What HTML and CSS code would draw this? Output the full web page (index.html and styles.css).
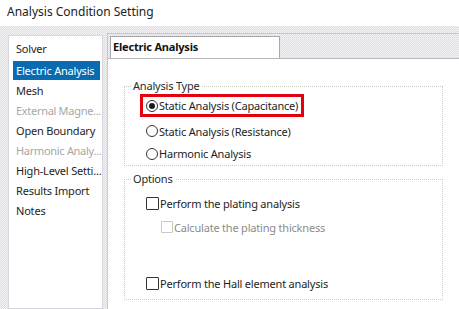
FILE: index.html
```html
<!DOCTYPE html>
<html>
<head>
<meta charset="utf-8">
<link rel="stylesheet" href="styles.css">
</head>
<body>
<div class="title">Analysis Condition Setting</div>
<div class="main">
  <div class="nav">
    <div class="item first">Solver</div>
    <div class="item selected">Electric Analysis</div>
    <div class="item">Mesh</div>
    <div class="item disabled">External Magne...</div>
    <div class="item">Open Boundary</div>
    <div class="item disabled">Harmonic Analy...</div>
    <div class="item">High-Level Setti...</div>
    <div class="item">Results Import</div>
    <div class="item">Notes</div>
  </div>
  <div class="panel">
    <div class="header"><div class="header-label">Electric Analysis</div></div>
    <div class="content">
      <div class="group type-group">
        <span class="legend">Analysis Type</span>
        <div class="radio-row highlight"><span class="radio checked"></span><span class="label">Static Analysis (Capacitance)</span></div>
        <div class="radio-row r2"><span class="radio"></span><span class="label">Static Analysis (Resistance)</span></div>
        <div class="radio-row r3"><span class="radio"></span><span class="label">Harmonic Analysis</span></div>
      </div>
      <div class="group options-group">
        <span class="legend">Options</span>
        <div class="check-row"><span class="check"></span><span class="label">Perform the plating analysis</span></div>
        <div class="check-row sub disabled"><span class="check"></span><span class="label">Calculate the plating thickness</span></div>
        <div class="check-row last"><span class="check"></span><span class="label">Perform the Hall element analysis</span></div>
      </div>
    </div>
  </div>
</div>
</body>
</html>
```
FILE: styles.css
```css
* { box-sizing: border-box; }
html, body { margin: 0; padding: 0; }
body {
  width: 459px;
  height: 309px;
  overflow: hidden;
  font-family: "Noto Sans", "Open Sans", sans-serif;
  font-size: 11px;
  letter-spacing: -0.2px;
  color: #1e1e1e;
  background-color: #ebe9ed;
  background-image: repeating-conic-gradient(#dddbe0 0 25%, #f5f4f6 0 50%);
  background-size: 2px 2px;
}
.title {
  height: 26px;
  background: #fff;
  padding: 4px 0 0 7px;
  font-size: 12px;
  letter-spacing: 0;
  line-height: 16px;
  color: #222;
}
.main {
  display: flex;
  align-items: flex-start;
  padding-left: 8px;
  height: 283px;
}
.nav {
  width: 95px;
  margin-top: 9px;
  height: 274px;
  background: #fff;
  border: 1px solid #d6d6dc;
  padding: 3px 1px 0 4px;
}
.item {
  height: 20px;
  line-height: 20px;
  padding-left: 3px;
  white-space: nowrap;
}
.item.first { margin-bottom: 2px; }
.item.selected {
  background: #0a6bb0;
  color: #fff;
  height: 19px;
  line-height: 19px;
  margin-bottom: 1px;
  margin-right: 1px;
}
.item.disabled { color: #a7a7a7; letter-spacing: -0.3px; }
.panel {
  flex: 1;
  margin-left: 4px;
  margin-top: 7px;
  height: 276px;
  border-left: 1px solid #c9c8cc;
  border-top: 1px solid #c9c8cc;
  display: flex;
  flex-direction: column;
}
.header {
  height: 25px;
  padding: 1px 0 0 2px;
  border-bottom: 1px solid #b9b8bd;
}
.header-label {
  margin-top: 1px;
  height: 22px;
  width: 170px;
  background: #fff;
  border: 1px solid #a9a9ad;
  border-bottom: none;
  padding-left: 2px;
  font-weight: bold;
  line-height: 19px;
  color: #111;
}
.content {
  flex: 1;
  background: #fff;
  padding: 27px 0 0 16px;
}
.group {
  position: relative;
  width: 319px;
  border: 1px dotted #c7cfc4;
}
.legend {
  position: absolute;
  left: 6px;
  top: -9px;
  background: #fff;
  padding: 0 2px;
  line-height: 16px;
  color: #2a2a2a;
}
.type-group {
  height: 80px;
  padding-top: 7px;
}
.radio-row {
  display: flex;
  align-items: center;
  height: 22px;
  margin-left: 21px;
  white-space: nowrap;
}
.radio-row.highlight {
  margin-left: 15px;
  width: 164px;
  height: 23px;
  border: 3px solid #e4000f;
  padding-left: 3px;
}
.radio-row.r2 { margin-top: 3px; }
.radio-row.r3 { height: 23px; }
.radio {
  flex: none;
  width: 12px;
  height: 12px;
  border: 1px solid #333;
  border-radius: 50%;
  margin-right: 1px;
  position: relative;
  background: #fff;
}
.radio.checked::after {
  content: "";
  position: absolute;
  left: 2px;
  top: 2px;
  width: 6px;
  height: 6px;
  border-radius: 50%;
  background: #1a1a1a;
}
.options-group {
  margin-top: 13px;
  height: 121px;
  padding-top: 11px;
}
.check-row {
  display: flex;
  align-items: center;
  height: 24px;
  margin-left: 21px;
  white-space: nowrap;
}
.check {
  flex: none;
  width: 13px;
  height: 13px;
  border: 1px solid #333;
  border-radius: 1px;
  margin-right: 1px;
  background: #fff;
}
.check-row.sub { margin-left: 36px; }
.check-row.sub .check { width: 12px; height: 12px; border-color: #c9c9c9; }
.check-row.disabled { color: #8c8c8c; }
.check-row.last { margin-top: 32px; }
```
